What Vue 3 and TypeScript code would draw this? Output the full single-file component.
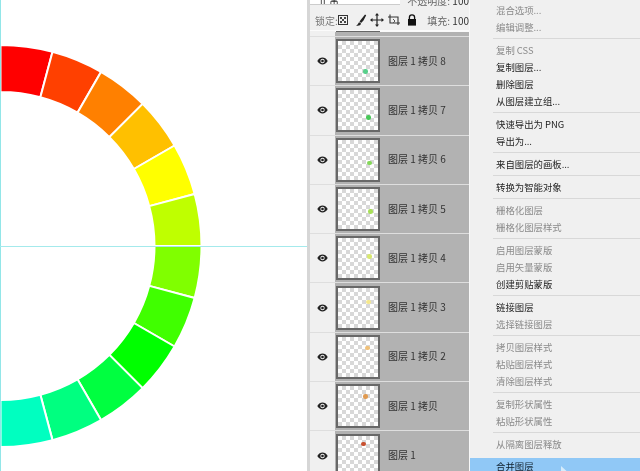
<script setup lang="ts">
interface Layer {
  name: string;
  dotX: number;
  dotY: number;
  dotColor: string;
}

interface MenuItem {
  label?: string;
  off?: boolean;
  sep?: boolean;
}

const CX = 0.5;
const CY = 246;
const OUTER = 201;
const INNER = 154;

const hues = [
  '#ff0000', '#ff4000', '#ff8000', '#ffc000', '#ffff00', '#bfff00',
  '#80ff00', '#40ff00', '#00ff00', '#00ff40', '#00ff80', '#00ffc0'
];

const point = (r: number, deg: number) => {
  const a = (deg * Math.PI) / 180;
  return `${(CX + r * Math.sin(a)).toFixed(2)} ${(CY - r * Math.cos(a)).toFixed(2)}`;
};

const segments = hues.map((color, i) => {
  const a = i * 15;
  const b = a + 15;
  return {
    color,
    d: `M${point(OUTER, a)} A${OUTER} ${OUTER} 0 0 1 ${point(OUTER, b)} L${point(INNER, b)} A${INNER} ${INNER} 0 0 0 ${point(INNER, a)} Z`
  };
});

const layers: Layer[] = [
  { name: '图层 1 拷贝 8', dotX: 29, dotY: 32, dotColor: '#57cf8a' },
  { name: '图层 1 拷贝 7', dotX: 32, dotY: 29, dotColor: '#48c858' },
  { name: '图层 1 拷贝 6', dotX: 33, dotY: 25, dotColor: '#84d858' },
  { name: '图层 1 拷贝 5', dotX: 34, dotY: 24, dotColor: '#a8e058' },
  { name: '图层 1 拷贝 4', dotX: 33, dotY: 20, dotColor: '#d8e870' },
  { name: '图层 1 拷贝 3', dotX: 32, dotY: 16, dotColor: '#f5e88c' },
  { name: '图层 1 拷贝 2', dotX: 31, dotY: 13, dotColor: '#f0c078' },
  { name: '图层 1 拷贝', dotX: 29, dotY: 12, dotColor: '#e09a50' },
  { name: '图层 1', dotX: 27, dotY: 10, dotColor: '#c85030' }
];

const menu: MenuItem[] = [
  { label: '混合选项...', off: true },
  { label: '编辑调整...', off: true },
  { sep: true },
  { label: '复制 CSS', off: true },
  { label: '复制图层...' },
  { label: '删除图层' },
  { label: '从图层建立组...' },
  { sep: true },
  { label: '快速导出为 PNG' },
  { label: '导出为...' },
  { sep: true },
  { label: '来自图层的画板...' },
  { sep: true },
  { label: '转换为智能对象' },
  { sep: true },
  { label: '栅格化图层', off: true },
  { label: '栅格化图层样式', off: true },
  { sep: true },
  { label: '启用图层蒙版', off: true },
  { label: '启用矢量蒙版', off: true },
  { label: '创建剪贴蒙版' },
  { sep: true },
  { label: '链接图层' },
  { label: '选择链接图层', off: true },
  { sep: true },
  { label: '拷贝图层样式', off: true },
  { label: '粘贴图层样式', off: true },
  { label: '清除图层样式', off: true },
  { sep: true },
  { label: '复制形状属性', off: true },
  { label: '粘贴形状属性', off: true },
  { sep: true },
  { label: '从隔离图层释放', off: true }
];
</script>

<template>
  <div class="screen">
    <div class="canvas">
      <svg width="307" height="471" viewBox="0 0 307 471">
        <path v-for="s in segments" :key="s.color" :d="s.d" :fill="s.color" stroke="#fff" stroke-width="2" />
        <rect x="0" y="0" width="1" height="471" fill="#92e6e8" />
        <rect x="0" y="246" width="307" height="1" fill="#a4eaec" />
      </svg>
    </div>

    <div class="panel">
      <div class="blend-row">
        <div class="blend-box"><span>正常</span></div>
        <span class="opacity">不透明度: <b>100</b></span>
      </div>
      <div class="lock-row">
        <span class="lock-label">锁定:</span>
        <svg class="lock-icons" width="84" height="14" viewBox="0 0 84 14">
          <rect x=".5" y="2.5" width="9" height="9" fill="none" stroke="#333" />
          <path d="M2 4h2v2H2zM6 4h2v2H6zM4 6h2v2H4zM2 8h2v2H2zM6 8h2v2H6z" fill="#444" />
          <path d="M27 1.500 23 6.500 21.500 8.500l1.600 1.400L25.500 7.500l2.700-5.300zM21.300 9.200c-1.200.4-1 2.600-3.200 3.300 2.200.6 4.700 0 4.900-2z" fill="#222" />
          <path d="M39 1.500v11M33.500 7h11" stroke="#222" stroke-width="1.200" />
          <path d="M39 0l2 2.500h-4zM39 14l2-2.500h-4zM32 7l2.500-2v4zM46 7l-2.500-2v4z" fill="#222" />
          <path d="M50 4h10v8M52 1.500V10h10" fill="none" stroke="#333" stroke-width="1.100" />
          <path d="M55 6l2 2-2 2" fill="none" stroke="#555" />
          <path d="M71.400 6V4.500a2.600 2.600 0 0 1 5.200 0V6" fill="none" stroke="#111" stroke-width="1.300" />
          <rect x="70" y="6" width="8" height="6.600" fill="#111" />
        </svg>
        <span class="fill-label">填充: <b>100</b></span>
      </div>
      <div class="layer-peek"><i></i></div>
      <div v-for="layer in layers" :key="layer.name" class="layer">
        <div class="eye">
          <svg width="11" height="8" viewBox="0 0 11 8">
            <path d="M.3 4C1.600 1.700 3.400.6 5.500.6S9.400 1.700 10.700 4C9.400 6.300 7.600 7.400 5.500 7.400S1.600 6.300.3 4Z" fill="#222" />
            <circle cx="5.500" cy="4" r="2.200" fill="#f0f0f0" />
            <circle cx="5.500" cy="4" r="1.300" fill="#222" />
          </svg>
        </div>
        <div class="layer-body">
          <div class="thumb">
            <i class="dot" :style="{ left: layer.dotX + 'px', top: layer.dotY + 'px', background: layer.dotColor }"></i>
          </div>
          <span class="layer-name">{{ layer.name }}</span>
        </div>
      </div>
    </div>

    <div class="menu">
      <template v-for="(item, i) in menu" :key="i">
        <div v-if="item.sep" class="sep"></div>
        <div v-else class="item" :class="{ off: item.off }">{{ item.label }}</div>
      </template>
      <div class="item active">
        合并图层
        <svg class="cursor" width="12" height="14" viewBox="0 0 12 14">
          <path d="M1 0v13l3.500-3.200L11 9Z" fill="#d6ecfb" />
        </svg>
      </div>
    </div>
  </div>
</template>

<style>
html,
body {
  margin: 0;
  overflow: hidden;
  background: #fff;
}
</style>

<style scoped>
.screen {
  display: flex;
  width: 640px;
  height: 471px;
  overflow: hidden;
  font-family: "Noto Sans CJK SC", "Liberation Sans", sans-serif;
  filter: blur(0.35px);
}
.canvas {
  flex: none;
  width: 307px;
  background: #fff;
}
.canvas svg {
  display: block;
}

.panel {
  flex: none;
  box-sizing: border-box;
  width: 162px;
  border-left: 3px solid #d6d6d6;
  background: #f0f0f0;
  overflow: hidden;
  color: #444;
  font-size: 10px;
}
.blend-row {
  display: flex;
  height: 10px;
  overflow: hidden;
}
.blend-box {
  box-sizing: border-box;
  width: 94px;
  height: 5px;
  overflow: hidden;
  background: #fff;
  border-bottom: 1px solid #ccc;
}
.blend-box span {
  display: block;
  margin: -6px 0 0 9px;
  line-height: 12px;
  color: #222;
}
.opacity {
  margin: -5px 0 0 7px;
  line-height: 12px;
  white-space: nowrap;
  color: #666;
}
.opacity b,
.fill-label b {
  font-weight: 400;
  color: #333;
}
.lock-row {
  display: flex;
  align-items: center;
  height: 20px;
  padding-left: 5px;
  white-space: nowrap;
  border-bottom: 1px solid #fbfbfb;
}
.lock-label {
  width: 29px;
  color: #777;
}
.lock-icons {
  flex: none;
  margin-right: 5px;
}
.fill-label {
  color: #666;
}
.layer-peek {
  height: 5px;
  margin-left: 25px;
  background: #b2b2b2;
  border-top: 1px solid #fafafa;
  box-sizing: border-box;
}
.layer-peek i {
  display: block;
  width: 44px;
  height: 1px;
  margin: -1px 0 0 1px;
  background: #666;
}
.layer {
  display: flex;
  box-sizing: border-box;
  height: 49.3px;
  border-top: 1px solid #dedede;
}
.eye {
  display: flex;
  flex: none;
  align-items: center;
  justify-content: center;
  width: 25px;
}
.layer-body {
  display: flex;
  flex: 1;
  align-items: center;
  gap: 8px;
  padding-left: 1px;
  background: #b2b2b2;
}
.thumb {
  position: relative;
  flex: none;
  box-sizing: border-box;
  width: 44px;
  height: 44px;
  border: 2px solid #686868;
  background-color: #fff;
  background-image:
    linear-gradient(45deg, #d8d8d8 25%, transparent 25%, transparent 75%, #d8d8d8 75%),
    linear-gradient(45deg, #d8d8d8 25%, transparent 25%, transparent 75%, #d8d8d8 75%);
  background-size: 8px 8px;
  background-position: 0 0, 4px 4px;
}
.dot {
  position: absolute;
  width: 4.5px;
  height: 4.5px;
  margin: -4px 0 0 -4px;
  border-radius: 50%;
}
.layer-name {
  padding-bottom: 2px;
  color: #333;
  white-space: nowrap;
}

.menu {
  flex: none;
  box-sizing: border-box;
  width: 171px;
  padding-top: 2px;
  border-left: 1px solid #f8f8f8;
  background: #f0f0f0;
  font-size: 9.4px;
  color: #1e1e1e;
}
.item {
  height: 17px;
  padding-left: 26px;
  line-height: 17px;
  white-space: nowrap;
}
.item.off {
  color: #8a8a8a;
}
.sep {
  height: 1px;
  margin: 2px 0 3px 23px;
  background: #d8d8d8;
}
.active {
  position: relative;
  height: 20px;
  margin-top: 5px;
  background: #90c8f6;
  color: #10202c;
}
.cursor {
  position: absolute;
  left: 90px;
  top: 8px;
}
</style>
